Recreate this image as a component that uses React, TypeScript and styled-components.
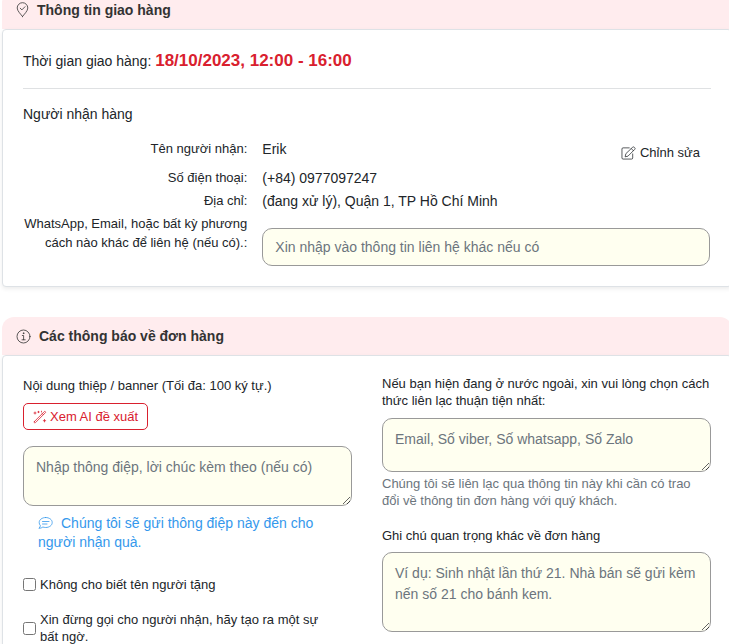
import React, { useId } from "react";
import styled, { createGlobalStyle } from "styled-components";

const GlobalStyle = createGlobalStyle`
  *, *::before, *::after { box-sizing: border-box; }
  html { overflow-x: hidden; scrollbar-width: none; }
  body {
    margin: 0;
    background: #fff;
    color: #212529;
    font-family: "Liberation Sans", Arial, sans-serif;
    font-size: 14px;
    line-height: 21px;
  }
`;

const Page = styled.main`
  display: flex;
  flex-direction: column;
  gap: 30px;
  margin: -9px -3px 0 2px;
`;

const SectionHeader = styled.h2`
  display: flex;
  align-items: center;
  gap: 8px;
  margin: 0;
  padding: 0 14px;
  height: 38px;
  border-radius: 12px 12px 0 0;
  background: #ffecee;
  color: #333;
  font-size: 14px;
  font-weight: 700;
  line-height: 38px;
`;

const Card = styled.div<{ $top: number }>`
  border: 1px solid #dee2e6;
  border-radius: 4px;
  background: #fff;
  box-shadow: 0 2px 4px rgba(0, 0, 0, 0.075);
  padding: ${(p) => p.$top}px 20px 20px;
`;

const DeliveryTime = styled.p`
  margin: 0;
  padding-bottom: 16px;
  border-bottom: 1px solid #dfe1e3;

  strong {
    color: #d9202e;
    font-size: 17px;
  }
`;

const SubTitle = styled.h3`
  margin: 15px 0 14px;
  font-size: 14px;
  font-weight: 400;
  line-height: 21px;
`;

const InfoRow = styled.div<{ $tall?: boolean }>`
  display: grid;
  grid-template-columns: minmax(0, 1fr) minmax(0, 2fr);
  column-gap: 15px;
  min-height: ${(p) => (p.$tall ? 29 : 23)}px;
`;

const RowLabel = styled.label`
  font-size: 13px;
  line-height: 19px;
  text-align: right;
`;

const RowName = styled(RowLabel).attrs({ as: "span" })``;

const RowValue = styled.div`
  display: flex;
  justify-content: space-between;
  align-items: flex-start;
`;

const EditLink = styled.button`
  display: flex;
  align-items: center;
  gap: 4px;
  margin: 3px 11px 0 0;
  padding: 0;
  border: 0;
  background: none;
  color: #212529;
  font: inherit;
  font-size: 13px;
  line-height: 21px;
  cursor: pointer;
`;

const field = `
  display: block;
  width: 100%;
  margin: 0;
  border: 1px solid #999;
  border-radius: 10px;
  background: #fffff0;
  color: #212529;
  font: inherit;
  line-height: 21px;

  &::placeholder {
    color: #6c757d;
    opacity: 1;
  }
`;

const TextInput = styled.input`
  ${field}
  height: 38px;
  padding: 6px 12px;
`;

const TextBox = styled.textarea<{ $height: number }>`
  ${field}
  height: ${(p) => p.$height}px;
  padding: 10px 12px;
  overflow: hidden;
  resize: vertical;
`;

const ContactField = styled.div`
  padding-top: 14px;
  margin-right: 1px;
`;

const Columns = styled.div`
  display: grid;
  grid-template-columns: repeat(2, minmax(0, 1fr));
  column-gap: 30px;
`;

const Column = styled.div`
  display: flex;
  flex-direction: column;
  align-items: flex-start;
`;

const FieldLabel = styled.label<{ $loose?: boolean; $gap: number }>`
  margin-bottom: ${(p) => p.$gap}px;
  font-size: 13px;
  line-height: ${(p) => (p.$loose ? 21 : 17)}px;
`;

const SuggestButton = styled.button`
  display: inline-flex;
  align-items: center;
  gap: 3px;
  height: 27px;
  margin-bottom: 16px;
  padding: 0 9px;
  border: 1px solid #d9202e;
  border-radius: 5px;
  background: #fff;
  color: #d9202e;
  font: inherit;
  font-size: 13px;
  cursor: pointer;
`;

const Hint = styled.p`
  margin: 8px 15px 24px;
  color: #3498ec;
  line-height: 19px;

  svg {
    margin-right: 8px;
    vertical-align: -2px;
  }
`;

const HelpText = styled.small`
  margin: 3px 0 18px;
  color: #6c757d;
  font-size: 13px;
  line-height: 17px;
`;

const CheckLabel = styled.label`
  display: flex;
  align-items: center;
  gap: 4px;
  margin-bottom: 18px;
  padding-right: 22px;
  font-size: 13px;
  line-height: 17px;

  input {
    flex: none;
    width: 13px;
    height: 13px;
    margin: 0;
  }
`;

const Glyph = styled.svg`
  flex: none;
  fill: none;
  stroke: currentColor;
  stroke-width: 0.8;
  stroke-linecap: round;
  stroke-linejoin: round;
`;

const PinCheckIcon = () => (
  <Glyph width="13" height="16" viewBox="0 0 13 16" aria-hidden="true">
    <path d="M6.5 14.5C5 12.4 1.2 9 1.2 6a5.3 5.3 0 0 1 10.6 0c0 3-3.8 6.4-5.3 8.5z" />
    <path d="M4.2 6.2l1.7 1.7L9 4.7" />
  </Glyph>
);

const InfoIcon = () => (
  <Glyph width="15" height="15" viewBox="0 0 15 15" aria-hidden="true">
    <circle cx="7.5" cy="7.5" r="6.5" />
    <path d="M6.3 6.5h1.3v4.2M6 10.8h3.2" />
    <circle cx="7.5" cy="4.2" r="0.4" fill="currentColor" />
  </Glyph>
);

const EditIcon = () => (
  <Glyph width="15" height="14" viewBox="0 0 16 15" aria-hidden="true">
    <path d="M8.8 2H2.2A1.2 1.2 0 0 0 1 3.2v9.6A1.2 1.2 0 0 0 2.2 14h9.1a1.2 1.2 0 0 0 1.2-1.2V8.5" />
    <path d="M12.4 1.3a1.2 1.2 0 0 1 1.7 0l.6.6a1.2 1.2 0 0 1 0 1.7L7.4 10.9l-3 .7.7-3z" />
    <path d="M11 2.8L13.2 5" />
  </Glyph>
);

const WandIcon = () => (
  <Glyph width="14" height="14" viewBox="0 0 14 14" aria-hidden="true">
    <path d="M1.3 11.6L11.300 1.600a.7.7 0 0 1 1 0l.1.1a.7.7 0 0 1 0 1L2.400 12.700a.7.7 0 0 1-1 0l-.1-.1a.7.7 0 0 1 0-1zM9.300 3.600l1.100 1.100" />
    <path d="M2 2v2M1 3h2M5.500 1.300v1.400M4.800 2h1.400M8.500 1.200v.8M11.500 9.500v2.400M10.300 10.700h2.400" />
  </Glyph>
);

const MessageIcon = () => (
  <Glyph width="15" height="14" viewBox="0 0 15 14" aria-hidden="true">
    <path d="M7.7 1.5c3.7 0 6.5 2.2 6.5 5s-2.8 5-6.5 5c-1 0-2-.2-2.8-.5-1 .8-2.3 1.3-4 1.3.8-.8 1.4-1.7 1.5-2.6C1.6 8.8 1.2 7.7 1.2 6.5c0-2.8 2.8-5 6.5-5z" />
    <path d="M4.5 5.5h6.500M4.5 8h4.500" />
  </Glyph>
);

type CheckProps = { text: string };

const Check = ({ text }: CheckProps) => (
  <CheckLabel>
    <input type="checkbox" />
    <span>{text}</span>
  </CheckLabel>
);

type AreaProps = {
  label: string;
  loose?: boolean;
  gap: number;
  height: number;
  placeholder: string;
  action?: React.ReactNode;
};

const AreaField = ({ label, loose, gap, height, placeholder, action }: AreaProps) => {
  const id = useId();
  return (
    <>
      <FieldLabel htmlFor={id} $loose={loose} $gap={gap}>
        {label}
      </FieldLabel>
      {action}
      <TextBox id={id} $height={height} placeholder={placeholder} />
    </>
  );
};

const DeliverySection = () => (
  <section>
    <SectionHeader>
      <PinCheckIcon />
      Thông tin giao hàng
    </SectionHeader>
    <Card $top={20}>
      <DeliveryTime>
        Thời gian giao hàng: <strong>18/10/2023, 12:00 - 16:00</strong>
      </DeliveryTime>
      <SubTitle>Người nhận hàng</SubTitle>
      <InfoRow $tall>
        <RowName>Tên người nhận:</RowName>
        <RowValue>
          <span>Erik</span>
          <EditLink type="button">
            <EditIcon />
            Chỉnh sửa
          </EditLink>
        </RowValue>
      </InfoRow>
      <InfoRow>
        <RowName>Số điện thoại:</RowName>
        <RowValue>(+84) 0977097247</RowValue>
      </InfoRow>
      <InfoRow>
        <RowName>Địa chỉ:</RowName>
        <RowValue>(đang xử lý), Quận 1, TP Hồ Chí Minh</RowValue>
      </InfoRow>
      <InfoRow>
        <RowLabel htmlFor="other-contact">
          WhatsApp, Email, hoặc bất kỳ phương cách nào khác để liên hệ (nếu có).:
        </RowLabel>
        <ContactField>
          <TextInput
            id="other-contact"
            type="text"
            placeholder="Xin nhập vào thông tin liên hệ khác nếu có"
          />
        </ContactField>
      </InfoRow>
    </Card>
  </section>
);

const NoticeSection = () => (
  <section>
    <SectionHeader>
      <InfoIcon />
      Các thông báo về đơn hàng
    </SectionHeader>
    <Card $top={19}>
      <Columns>
        <Column>
          <AreaField
            label="Nội dung thiệp / banner (Tối đa: 100 ký tự.)"
            loose
            gap={7}
            height={60}
            placeholder="Nhập thông điệp, lời chúc kèm theo (nếu có)"
            action={
              <SuggestButton type="button">
                <WandIcon />
                Xem AI đề xuất
              </SuggestButton>
            }
          />
          <Hint>
            <MessageIcon />
            Chúng tôi sẽ gửi thông điệp này đến cho người nhận quà.
          </Hint>
          <Check text="Không cho biết tên người tặng" />
          <Check text="Xin đừng gọi cho người nhận, hãy tạo ra một sự bất ngờ." />
        </Column>
        <Column>
          <AreaField
            label="Nếu bạn hiện đang ở nước ngoài, xin vui lòng chọn cách thức liên lạc thuận tiện nhất:"
            gap={9}
            height={54}
            placeholder="Email, Số viber, Số whatsapp, Số Zalo"
          />
          <HelpText>
            Chúng tôi sẽ liên lạc qua thông tin này khi cần có trao đổi về thông tin đơn hàng với quý khách.
          </HelpText>
          <AreaField
            label="Ghi chú quan trọng khác về đơn hàng"
            gap={8}
            height={80}
            placeholder="Ví dụ: Sinh nhật lần thứ 21. Nhà bán sẽ gửi kèm nến số 21 cho bánh kem."
          />
        </Column>
      </Columns>
    </Card>
  </section>
);

export default function App() {
  return (
    <>
      <GlobalStyle />
      <Page>
        <DeliverySection />
        <NoticeSection />
      </Page>
    </>
  );
}
